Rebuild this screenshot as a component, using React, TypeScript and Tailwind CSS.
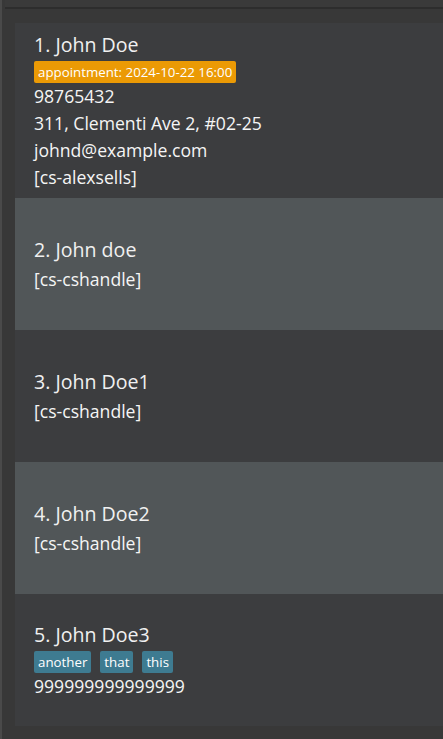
import React from "react";

type Person = {
  name: string;
  tags?: { label: string; tone: "appt" | "tag" }[];
  details: string[];
};

const people: Person[] = [
  {
    name: "1. John Doe",
    tags: [{ label: "appointment: 2024-10-22 16:00", tone: "appt" }],
    details: ["98765432", "311, Clementi Ave 2, #02-25", "johnd@example.com", "[cs-alexsells]"],
  },
  { name: "2. John doe", details: ["[cs-cshandle]"] },
  { name: "3. John Doe1", details: ["[cs-cshandle]"] },
  { name: "4. John Doe2", details: ["[cs-cshandle]"] },
  {
    name: "5. John Doe3",
    tags: [
      { label: "another", tone: "tag" },
      { label: "that", tone: "tag" },
      { label: "this", tone: "tag" },
    ],
    details: ["999999999999999"],
  },
];

function PersonCard({ person, index }: { person: Person; index: number }) {
  const bg = index % 2 === 0 ? "bg-[#3c3d3f]" : "bg-[#515658]";
  return (
    <div className={`${bg} flex min-h-[132px] flex-col justify-center pb-[7px] pl-[19px] pt-[10px]`}>
      <div className="text-[19.6px] leading-[24px] text-[#f0f0f0]">{person.name}</div>
      <div className="mt-[4px] flex gap-[9px]">
        {person.tags?.map((t) => (
          <span
            key={t.label}
            className={`${t.tone === "appt" ? "bg-[#eb9a05]" : "bg-[#3e7b91]"} rounded-[2px] px-[4px] text-[13.3px] leading-[22px] text-white`}
          >
            {t.label}
          </span>
        ))}
      </div>
      {person.details.map((d) => (
        <div key={d} className="text-[17.6px] leading-[27px] text-[#f5f5f5]">
          {d}
        </div>
      ))}
    </div>
  );
}

export default function App() {
  return (
    <div
      className="h-[739px] w-[443px] overflow-hidden border-l-2 border-[#4a4a4a] bg-[#383838]"
      style={{ fontFamily: '"Open Sans", "Noto Sans", sans-serif' }}
    >
      {/* top panel edge */}
      <div className="ml-[3px] h-[9px] border-b-2 border-[#2d2d2d] bg-[#3a3a3a]" />
      <div className="pl-[13px] pt-[14px]">
        {people.map((p, i) => (
          <PersonCard key={p.name} person={p} index={i} />
        ))}
      </div>
    </div>
  );
}
